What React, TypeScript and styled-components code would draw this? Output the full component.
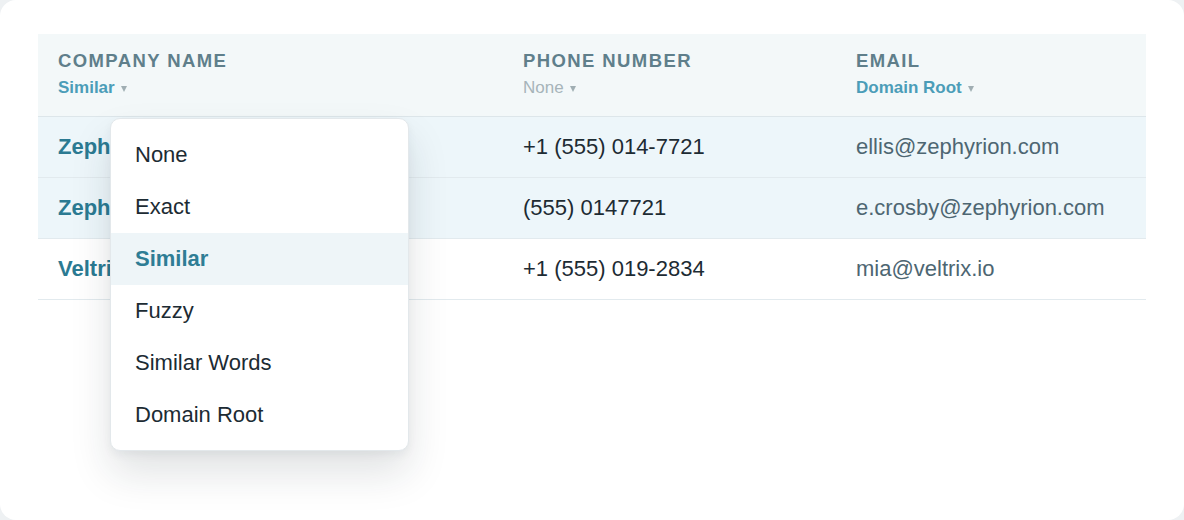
import React from "react";
import styled, { createGlobalStyle } from "styled-components";

const GlobalStyle = createGlobalStyle`
  html, body {
    margin: 0;
    padding: 0;
    background: #eef1f3;
  }
  body {
    font-family: "Liberation Sans", Arial, sans-serif;
  }
`;

type Row = { company: string; phone: string; email: string; dup?: boolean };

const rows: Row[] = [
  { company: "Zephyrion Labs", phone: "+1 (555) 014-7721", email: "ellis@zephyrion.com", dup: true },
  { company: "Zephyrion Labs Inc.", phone: "(555) 0147721", email: "e.crosby@zephyrion.com", dup: true },
  { company: "Veltrix Systems", phone: "+1 (555) 019-2834", email: "mia@veltrix.io" },
];

const options = ["None", "Exact", "Similar", "Fuzzy", "Similar Words", "Domain Root"];

const App = () => {
  return (
    <>
      <GlobalStyle />
      <Card>
        <Table>
          <HeadRow>
            <HeadCell>
              <Label>Company Name</Label>
              <Filter $active>
                Similar<Caret />
              </Filter>
              <Menu>
                {options.map((o) => (
                  <MenuItem key={o} $selected={o === "Similar"}>
                    {o}
                  </MenuItem>
                ))}
              </Menu>
            </HeadCell>
            <HeadCell>
              <Label>Phone Number</Label>
              <Filter>
                None<Caret />
              </Filter>
            </HeadCell>
            <HeadCell>
              <Label>Email</Label>
              <Filter $active>
                Domain Root<Caret />
              </Filter>
            </HeadCell>
          </HeadRow>
          {rows.map((r) => (
            <BodyRow key={r.email} $dup={r.dup}>
              <Company>{r.company}</Company>
              <Phone>{r.phone}</Phone>
              <Email>{r.email}</Email>
            </BodyRow>
          ))}
        </Table>
      </Card>
    </>
  );
};

export default App;

const Card = styled.div`
  width: 1184px;
  height: 520px;
  box-sizing: border-box;
  background: #fff;
  border-radius: 16px;
  padding: 34px 38px;
`;

const Table = styled.div`
  display: flex;
  flex-direction: column;
`;

const columns = `465px 333px 1fr`;

const HeadRow = styled.div`
  display: grid;
  grid-template-columns: ${columns};
  height: 82px;
  background: #f3f8f9;
  border-bottom: 1px solid #dde6ea;
`;

const HeadCell = styled.div`
  position: relative;
  padding: 16px 20px 0;
  display: flex;
  flex-direction: column;
  gap: 6px;
`;

const Label = styled.div`
  font-size: 18.5px;
  font-weight: 700;
  text-transform: uppercase;
  letter-spacing: 1.4px;
  color: #5f7f8b;
  line-height: 22px;
`;

const Filter = styled.div<{ $active?: boolean }>`
  display: flex;
  align-items: center;
  font-size: 17px;
  line-height: 20px;
  font-weight: ${(p) => (p.$active ? 700 : 400)};
  color: ${(p) => (p.$active ? "#4b9db8" : "#a6b4b9")};
`;

const Caret = styled.span`
  width: 0;
  height: 0;
  margin-left: 6px;
  margin-top: 1px;
  border-left: 3.5px solid transparent;
  border-right: 3.5px solid transparent;
  border-top: 6px solid #a0aeb3;
`;

const BodyRow = styled.div<{ $dup?: boolean }>`
  display: grid;
  grid-template-columns: ${columns};
  height: 60px;
  align-items: center;
  background: ${(p) => (p.$dup ? "#edf6fa" : "#fff")};
  border-bottom: 1px solid #e2eaee;
  font-size: 22px;
  > div {
    padding: 0 20px;
    white-space: nowrap;
  }
`;

const Company = styled.div`
  font-weight: 700;
  color: #2b7a92;
`;

const Phone = styled.div`
  color: #1d2b33;
`;

const Email = styled.div`
  color: #4d6672;
`;

const Menu = styled.div`
  position: absolute;
  left: 72px;
  top: 84px;
  width: 299px;
  box-sizing: border-box;
  padding: 10px 0 9px;
  background: #fff;
  border: 1px solid #e3e8eb;
  border-radius: 10px;
  box-shadow: 0 22px 40px rgba(20, 40, 50, 0.13), 0 4px 10px rgba(20, 40, 50, 0.05);
  z-index: 10;
`;

const MenuItem = styled.div<{ $selected?: boolean }>`
  height: 52px;
  display: flex;
  align-items: center;
  padding: 0 24px;
  font-size: 22px;
  font-weight: ${(p) => (p.$selected ? 700 : 400)};
  color: ${(p) => (p.$selected ? "#2e7d95" : "#1c2b33")};
  background: ${(p) => (p.$selected ? "#eef5f8" : "transparent")};
`;
